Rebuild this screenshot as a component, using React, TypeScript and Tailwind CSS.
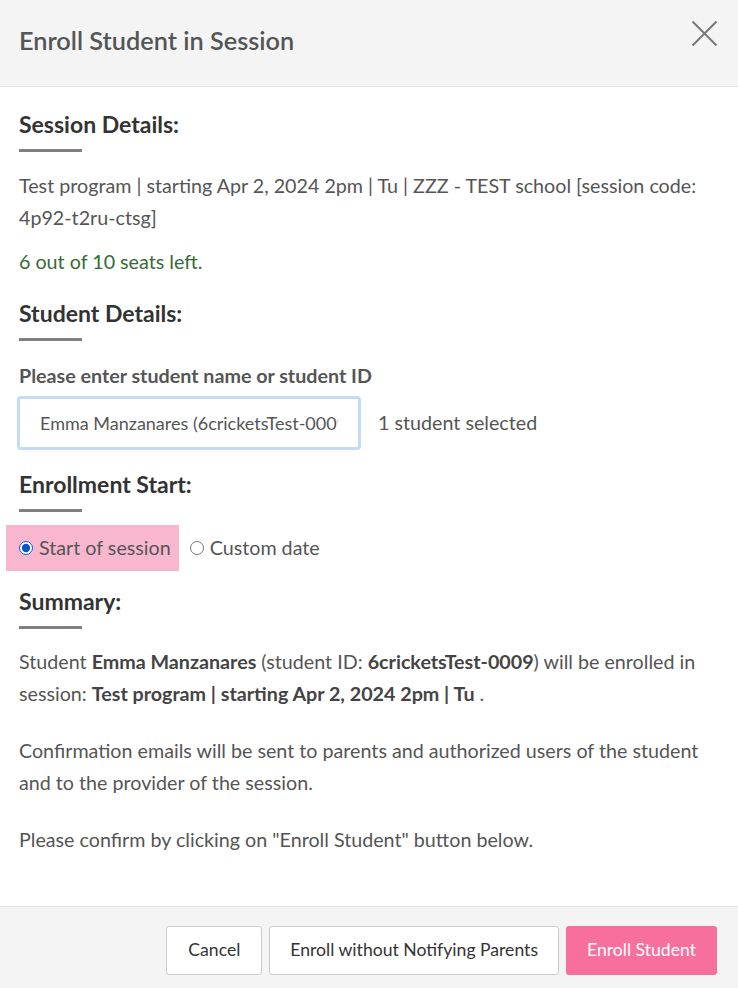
import { useState } from 'react';

function SectionTitle({ children }: { children: React.ReactNode }) {
  return (
    <div>
      <h3 className="text-[23px] leading-[28px] font-bold text-[#333]">{children}</h3>
      <div className="mt-[11px] h-[3px] w-[63px] bg-[#808080]" />
    </div>
  );
}

export default function App() {
  const [start, setStart] = useState<'session' | 'custom'>('session');

  return (
    <div
      className="w-[738px] h-[988px] bg-white flex flex-col text-[#555]"
      style={{ fontFamily: 'Lato, "Noto Sans", sans-serif' }}
    >
      {/* header */}
      <div className="h-[87px] shrink-0 bg-[#f4f4f4] border-b border-[#e3e3e3] flex items-center justify-between pl-[19px] pr-[20px]">
        <h2 className="text-[25.3px] font-semibold text-[#555] -mt-[4px]">Enroll Student in Session</h2>
        <button className="-mt-[20px] text-[#777]" aria-label="Close">
          <svg width="27" height="27" viewBox="0 0 27 27" fill="none" stroke="currentColor" strokeWidth="2">
            <path d="M1.5 1.5 L25.5 25.5 M25.5 1.5 L1.5 25.5" />
          </svg>
        </button>
      </div>

      {/* body */}
      <div className="flex-1 px-[19px] pt-[23px] text-[19.7px]">
        <SectionTitle>Session Details:</SectionTitle>
        <p className="mt-[18px] leading-[32px]">
          Test program | starting Apr 2, 2024 2pm | Tu | ZZZ - TEST school [session code: 4p92-t2ru-ctsg]
        </p>
        <p className="mt-[12px] leading-[32px] text-[#356b35]">6 out of 10 seats left.</p>

        <div className="mt-[21px]">
          <SectionTitle>Student Details:</SectionTitle>
        </div>
        <label className="block mt-[22px] font-bold leading-[26px] text-[#555]">
          Please enter student name or student ID
        </label>
        <div className="mt-[7px] flex items-center gap-[17px] -ml-[2px]">
          <input
            readOnly
            value="Emma Manzanares (6cricketsTest-0009)"
            className="w-[344px] h-[54px] rounded-[4px] border-[3px] border-[#c3dbf7] bg-white pl-[20px] pr-[20px] text-[18px] text-[#555] outline-none"
          />
          <span>1 student selected</span>
        </div>

        <div className="mt-[20px]">
          <SectionTitle>Enrollment Start:</SectionTitle>
        </div>
        <div className="mt-[13px] flex items-center">
          <label
            className={`-ml-[13px] h-[46px] flex items-center pl-[13px] pr-[8px] cursor-pointer ${
              start === 'session' ? 'bg-[#f8b7cf]' : ''
            }`}
          >
            <input
              type="radio"
              name="start"
              checked={start === 'session'}
              onChange={() => setStart('session')}
              className="m-0 w-[14px] h-[14px] accent-[#0b57d0]"
            />
            <span className="ml-[6px]">Start of session</span>
          </label>
          <label
            className={`h-[46px] flex items-center pl-[11px] pr-[8px] cursor-pointer ${
              start === 'custom' ? 'bg-[#f8b7cf]' : ''
            }`}
          >
            <input
              type="radio"
              name="start"
              checked={start === 'custom'}
              onChange={() => setStart('custom')}
              className="m-0 w-[14px] h-[14px] accent-[#0b57d0]"
            />
            <span className="ml-[6px]">Custom date</span>
          </label>
        </div>

        <div className="mt-[16px]">
          <SectionTitle>Summary:</SectionTitle>
        </div>
        <p className="mt-[17px] leading-[32px]">
          Student <b className="text-[#444]">Emma Manzanares</b> (student ID: <b className="text-[#444]">6cricketsTest-0009</b>) will
          be enrolled in session: <b className="text-[#444]">Test program | starting Apr 2, 2024 2pm | Tu</b> .
        </p>
        <p className="mt-[25px] leading-[32px]">
          Confirmation emails will be sent to parents and authorized users of the student and to the provider of the session.
        </p>
        <p className="mt-[25px] leading-[32px]">Please confirm by clicking on "Enroll Student" button below.</p>
      </div>

      {/* footer */}
      <div className="h-[82px] shrink-0 bg-[#f4f4f4] border-t border-[#e3e3e3] flex items-start justify-end gap-[7px] pt-[19px] pr-[21px] text-[17.6px]">
        <button className="h-[49px] px-[21px] rounded-[3px] border border-[#ccc] bg-white text-[#333]">Cancel</button>
        <button className="h-[49px] px-[20px] rounded-[3px] border border-[#ccc] bg-white text-[#333]">
          Enroll without Notifying Parents
        </button>
        <button className="h-[49px] px-[21px] rounded-[3px] bg-[#f7709d] text-white">Enroll Student</button>
      </div>
    </div>
  );
}
